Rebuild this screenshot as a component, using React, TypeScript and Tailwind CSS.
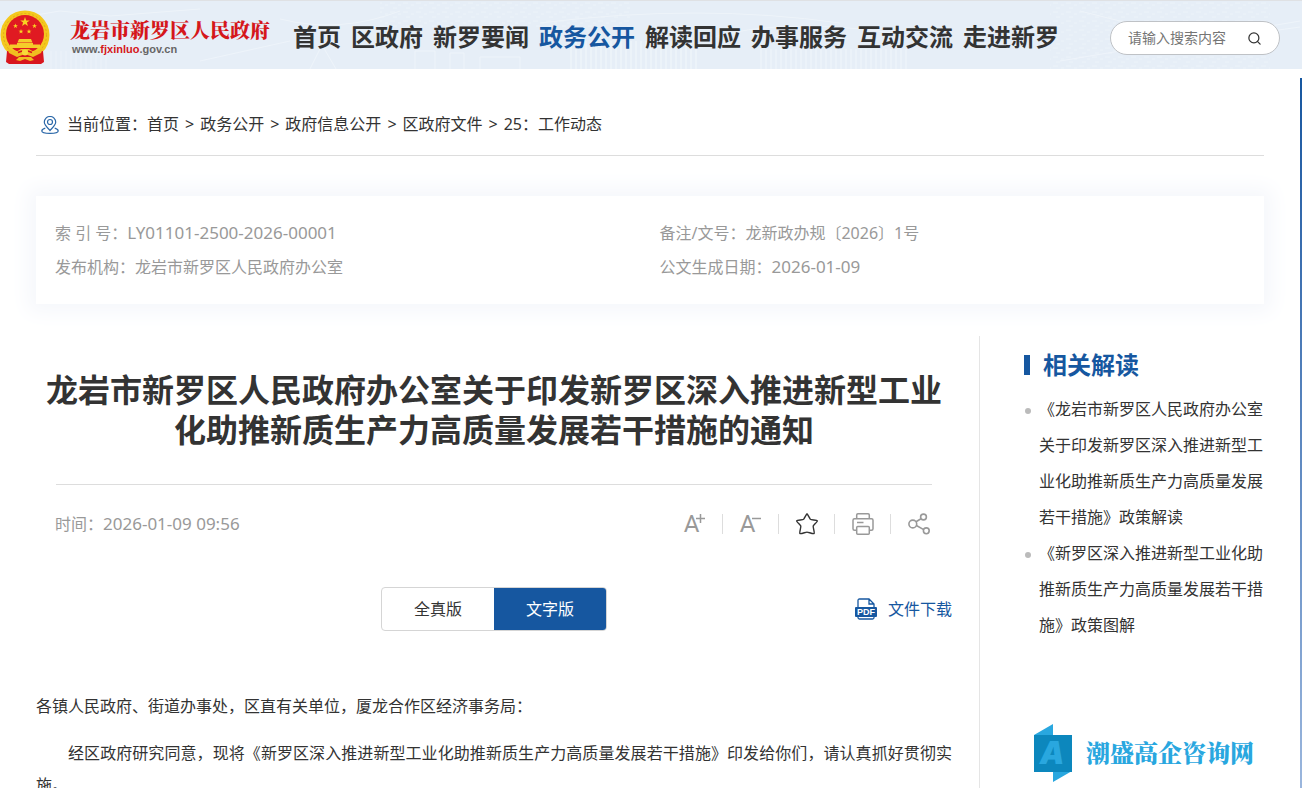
import { Search } from 'lucide-react';

const NAV = ['首页', '区政府', '新罗要闻', '政务公开', '解读回应', '办事服务', '互动交流', '走进新罗'];
const CRUMBS = ['首页', '政务公开', '政府信息公开', '区政府文件', '25：工作动态'];
const RELATED = [
    '《龙岩市新罗区人民政府办公室关于印发新罗区深入推进新型工业化助推新质生产力高质量发展若干措施》政策解读',
    '《新罗区深入推进新型工业化助推新质生产力高质量发展若干措施》政策图解',
];

function starPoints(cx: number, cy: number, r: number) {
    const pts: string[] = [];
    for (let i = 0; i < 10; i++) {
        const a = -Math.PI / 2 + (i * Math.PI) / 5;
        const d = i % 2 ? r * 0.4 : r;
        pts.push(`${(cx + d * Math.cos(a)).toFixed(2)},${(cy + d * Math.sin(a)).toFixed(2)}`);
    }
    return pts.join(' ');
}

function Emblem() {
    return (
        <svg className="w-[50px] h-[54px] shrink-0" viewBox="0 0 50 54" aria-hidden="true">
            <circle cx="25" cy="25" r="24.5" fill="#f4c81e" />
            <circle cx="25" cy="25" r="21.500" fill="none" stroke="#e3ab18" strokeWidth="1" strokeDasharray="2 2" />
            <circle cx="25" cy="24" r="19" fill="#e01a22" />
            <polygon points={starPoints(25, 12, 5)} fill="#f8d322" />
            <polygon points={starPoints(15.5, 16, 2.6)} fill="#f8d322" />
            <polygon points={starPoints(34.5, 16, 2.6)} fill="#f8d322" />
            <polygon points={starPoints(21, 21.5, 2.6)} fill="#f8d322" />
            <polygon points={starPoints(29, 21.5, 2.6)} fill="#f8d322" />
            {/* Gate */}
            <path d="M19 29h12l1.500 3.500h-15zM17 33h16v2H17zM10 34.500h30v3.500H10z" fill="#f5cc2a" />
            {/* Ribbon and gear */}
            <path d="M7 41l9 1h18l9-1 1 11-3 2H9l-3-2z" fill="#d8161e" />
            <path d="M7 38l9 4 5-3h8l5 3 9-4-2 5-8 4-8-3-8 3-8-4z" fill="#f0bd20" />
            <path d="M18 42.500l4-1.500M28 41l4 1.500" stroke="#d8161e" strokeWidth="1.500" fill="none" />
            <circle cx="25" cy="42.500" r="3" fill="#f8d93a" />
            <path d="M16 50l3-3h12l3 3-4 1-5-2-5 2z" fill="#f0bd20" />
        </svg>
    );
}

/* Faint skyline behind the header */
function HeaderTexture() {
    return (
        <svg className="absolute inset-0 w-full h-full pointer-events-none" preserveAspectRatio="none" viewBox="0 0 1302 68" aria-hidden="true">
            <defs>
                <pattern id="bars" width="5" height="30" patternUnits="userSpaceOnUse">
                    <path d="M1 0v30" stroke="#eff5fa" strokeWidth="2" />
                </pattern>
                <pattern id="dots" width="13" height="9" patternUnits="userSpaceOnUse">
                    <path d="M0 2h5M8 4h3M3 7h4" stroke="#ecf3f9" strokeWidth="1" />
                </pattern>
            </defs>
            <rect x="380" y="0" width="250" height="26" fill="url(#dots)" />
            <rect x="1050" y="0" width="220" height="68" fill="url(#dots)" />
            <rect x="50" y="50" width="60" height="18" fill="url(#bars)" opacity=".3" />
            <rect x="568" y="40" width="130" height="28" fill="url(#bars)" opacity=".7" />
            <rect x="760" y="48" width="150" height="20" fill="url(#bars)" opacity=".5" />
            <g fill="none" stroke="#eef4fa">
                <path d="M0 20l60-10 50 5 90-7M280 18q60 15 120-8M310 68l12-24 14 24M415 68V50h20v18M450 68V52h14v16M480 68V56h40v12" />
                <path d="M200 60l90-20M540 22q160-20 300 0M700 40q90-30 240 0M1060 60l240-40M1080 10l120 30 100-14" />
            </g>
        </svg>
    );
}

function PinIcon() {
    return (
        <svg className="w-[18px] h-[18px] mt-[2px]" viewBox="0 0 18 18" fill="none" stroke="#2a67a8" strokeWidth="1.200" aria-hidden="true">
            <path d="M9 14.500C6 11.200 3.300 8.800 3.300 6.200a5.700 5.700 0 0111.400 0c0 2.600-2.700 5-5.700 8.300z" />
            <circle cx="9" cy="6" r="2.500" />
            <path d="M4.300 12.200C2.200 12.800.8 13.700.8 14.900c0 1.500 3.600 2.400 8.200 2.400s8.200-.9 8.200-2.400c0-1.200-1.400-2.100-3.500-2.700" />
        </svg>
    );
}

function StarIcon() {
    return (
        <svg className="w-6 h-6" viewBox="0 0 24 24" fill="none" stroke="#333" strokeWidth="1.400" strokeLinejoin="round" aria-hidden="true">
            <path d="M12 1.800c.5 0 2.600 4.800 3.400 5.500.8.600 6.500.8 7 1.500.4.800-3.800 4-4.200 5.200-.3 1.200 1.600 6.700.9 7.500-.9.700-5.800-1.400-7.100-1.400s-6.200 2.100-7.100 1.400c-.7-.8 1.200-6.300.9-7.500C5.400 12.800 1.200 9.600 1.600 8.800c.5-.7 6.200-.9 7-1.500.8-.7 2.900-5.500 3.400-5.500z" />
        </svg>
    );
}

function PrintIcon() {
    return (
        <svg className="w-[22px] h-[22px]" viewBox="0 0 22 22" fill="none" stroke="#999" strokeWidth="1.500" aria-hidden="true">
            <path d="M4.700 5.500V2q0-1.200 1.200-1.200h10.200q1.200 0 1.200 1.200v3.500" />
            <path d="M4.700 17.300H2.500Q1 17.300 1 15.800V7.200q0-1.500 1.500-1.500h17q1.500 0 1.500 1.500v8.600q0 1.500-1.500 1.500h-2.200M5 9.500h6.500" />
            <rect x="4.700" y="13.500" width="12.600" height="7.700" rx="1" />
        </svg>
    );
}

function ShareIcon() {
    return (
        <svg className="w-[22px] h-[22px]" viewBox="0 0 22 22" fill="none" stroke="#999" strokeWidth="1.600" aria-hidden="true">
            <circle cx="4.800" cy="11" r="3.900" />
            <circle cx="15.500" cy="4" r="2.900" />
            <circle cx="18.300" cy="17.800" r="2.900" />
            <path d="M8 8.700l5-3M8.400 12.500l7.300 4.100" />
        </svg>
    );
}

function PdfIcon() {
    return (
        <svg className="w-[22px] h-[22px]" viewBox="0 0 22 22" aria-hidden="true">
            <path d="M3 10V2.500Q3 1 4.500 1H14l5 5v4M14 1v5h5M3 17v2.500Q3 21 4.500 21h13q1.500 0 1.500-1.500V17" fill="none" stroke="#1657a0" strokeWidth="1.300" />
            <rect x="0" y="9" width="22" height="10" rx="1" fill="#1657a0" />
            <text x="11" y="17" textAnchor="middle" fontSize="9" fontWeight="700" fill="#fff" fontFamily="Liberation Sans, sans-serif">PDF</text>
        </svg>
    );
}

function Header() {
    return (
        <header className="relative border-t border-[#dfe1e4] bg-[#e6eef7]">
            <HeaderTexture />
            <div className="relative flex items-center h-[68px] pr-[22px]">
                <a href="#" className="flex items-center gap-5 w-[293px] pt-1 shrink-0">
                    <Emblem />
                    <span className="flex flex-col">
                        <span className="text-xl leading-6 font-black text-[#d5171b] font-['Liberation_Serif','Noto_Serif_CJK_SC','Noto_Sans_CJK_SC',serif]">龙岩市新罗区人民政府</span>
                        <span className="pl-[2px] text-[11px] leading-3 font-bold text-[#666] font-['Liberation_Sans',sans-serif]">
                            www.<span className="text-[#d5171b]">fjxinluo</span>.gov.cn
                        </span>
                    </span>
                </a>
                <nav className="flex gap-[10px] whitespace-nowrap pt-1">
                    {NAV.map((item) => (
                        <a key={item} href="#" className={`text-2xl font-bold ${item === '政务公开' ? 'text-[#1657a0]' : 'text-[#333]'}`}>
                            {item}
                        </a>
                    ))}
                </nav>
                <form className="ml-auto mt-[6px] flex items-center w-[170px] h-[34px] pl-[17px] pr-[17px] rounded-full border border-[#bfc2c6] bg-white">
                    <input
                        type="text"
                        aria-label="搜索"
                        placeholder="请输入搜索内容"
                        className="flex-1 min-w-0 text-sm outline-none placeholder:text-[#757575]"
                    />
                    <button type="button" aria-label="提交搜索">
                        <Search className="w-[15px] h-[15px] text-[#333]" strokeWidth={2} />
                    </button>
                </form>
            </div>
        </header>
    );
}

function Tools() {
    const cell = 'flex items-center justify-center w-14 h-5';
    return (
        <div className="flex divide-x divide-[#ddd]">
            <button type="button" aria-label="放大字体" className={cell}>
                <span className="text-2xl leading-5 text-[#999] font-['Roboto',sans-serif]">A</span>
                <svg className="-ml-[3px] mb-3 w-[9px] h-[9px]" viewBox="0 0 9 9" stroke="#999" strokeWidth="1.500" aria-hidden="true">
                    <path d="M0 4.500h9M4.500 0v9" />
                </svg>
            </button>
            <button type="button" aria-label="缩小字体" className={cell}>
                <span className="text-2xl leading-5 text-[#999] font-['Roboto',sans-serif]">A</span>
                <svg className="-ml-[3px] mb-3 w-[9px] h-[9px]" viewBox="0 0 9 9" stroke="#999" strokeWidth="1.500" aria-hidden="true">
                    <path d="M0 4.500h9" />
                </svg>
            </button>
            <button type="button" aria-label="收藏" className={cell}><StarIcon /></button>
            <button type="button" aria-label="打印" className={cell}><PrintIcon /></button>
            <button type="button" aria-label="分享" className={cell}><ShareIcon /></button>
        </div>
    );
}

function Article() {
    return (
        <article className="flex-1 min-w-0 pr-[27px] pt-[34px]">
            <h1 className="px-[10px] text-[32px] leading-10 font-bold text-center text-[#333]">
                龙岩市新罗区人民政府办公室关于印发新罗区深入推进新型工业化助推新质生产力高质量发展若干措施的通知
            </h1>
            <hr className="mx-5 mt-[34px] border-[#ddd]" />
            <div className="flex items-center justify-between h-[78px] pl-[19px] pr-[5px] text-[#999]">
                <p>时间：<time className="text-[17px]">2026-01-09 09:56</time></p>
                <Tools />
            </div>
            <div className="grid grid-cols-[1fr_auto_1fr] items-center mt-6">
                <div className="col-start-2 flex h-11 rounded border border-[#d5d5d5] overflow-hidden">
                    <button type="button" className="w-28 text-[#333]">全真版</button>
                    <button type="button" className="w-28 bg-[#1657a0] text-white">文字版</button>
                </div>
                <a href="#" className="flex items-center gap-[11px] justify-self-end text-[#1657a0]">
                    <PdfIcon />
                    文件下载
                </a>
            </div>
            <div className="mt-[59px] leading-8 text-justify text-[#333]">
                <p>各镇人民政府、街道办事处，区直有关单位，厦龙合作区经济事务局：</p>
                <p className="mt-[15px] indent-8">
                    经区政府研究同意，现将《新罗区深入推进新型工业化助推新质生产力高质量发展若干措施》印发给你们，请认真抓好贯彻实施。
                </p>
            </div>
        </article>
    );
}

function Sidebar() {
    return (
        <aside className="w-[285px] shrink-0 pl-11 pt-[11px] border-l border-[#e5e5e5]">
            <h2 className="flex items-center gap-[13px] h-9 text-2xl font-bold text-[#1657a0]">
                <span className="w-[6px] h-5 bg-[#1657a0]" />
                相关解读
            </h2>
            <ul className="mt-2">
                {RELATED.map((text) => (
                    <li key={text} className="flex gap-2">
                        <span className="mt-[17px] ml-px w-[6px] h-[6px] rounded-full bg-[#bbb] shrink-0" />
                        <a href="#" className="leading-9 text-[#333]">{text}</a>
                    </li>
                ))}
            </ul>
            <div className="flex items-center gap-[14px] mt-[81px] pl-[10px] whitespace-nowrap">
                <svg className="w-[38px] h-[58px] shrink-0" viewBox="0 0 38 58" aria-hidden="true">
                    <path d="M0 11L19 0v11zM19 47h19L19 58z" fill="#29a7df" />
                    <rect y="11" width="38" height="37" fill="#0c87bd" />
                    <text x="18" y="40" textAnchor="middle" fontSize="31" fontWeight="900" fontStyle="italic" fill="#29a7df" fontFamily="Inter, Liberation Sans, sans-serif">A</text>
                </svg>
                <span className="pt-[2px] text-2xl font-black text-[#29a7df] font-['Liberation_Serif','Noto_Serif_CJK_SC','Noto_Sans_CJK_SC',serif]">潮盛高企咨询网</span>
            </div>
        </aside>
    );
}

export default function App() {
    return (
        <div lang="zh-CN" className="flex flex-col min-h-screen bg-white text-base font-['Noto_Sans','Noto_Sans_CJK_SC',sans-serif]">
            <Header />
            <div className="flex flex-1">
                <main className="flex-1 min-w-0 px-9 pt-6">
                    <nav className="flex items-center h-[63px] pl-[5px] border-b border-[#ddd] text-[#333]" aria-label="当前位置">
                        <PinIcon />
                        <span className="pl-2">当前位置：</span>
                        <ol className="flex gap-[6px]">
                            {CRUMBS.map((c, i) => (
                                <li key={c} className="flex gap-[6px]">
                                    {i > 0 && <span>&gt;</span>}
                                    <a href="#">{c}</a>
                                </li>
                            ))}
                        </ol>
                    </nav>
                    <section className="grid grid-cols-2 mt-10 py-5 pl-[19px] leading-[34px] text-[#999] bg-white shadow-[0_0_20px_8px_#f5f7fb]">
                        <p>索 引 号：<span className="text-[17px]">LY01101-2500-2026-00001</span></p>
                        <p>备注/文号：龙新政办规〔2026〕1号</p>
                        <p>发布机构：龙岩市新罗区人民政府办公室</p>
                        <p>公文生成日期：<time className="text-[17px]">2026-01-09</time></p>
                    </section>
                    <div className="flex mt-8">
                        <Article />
                        <Sidebar />
                    </div>
                </main>
                {/* Page background showing beside the content */}
                <div className="w-[2px] mt-[9px] bg-linear-to-b from-[#1657a0] to-[#9db8de]" />
            </div>
        </div>
    );
}
